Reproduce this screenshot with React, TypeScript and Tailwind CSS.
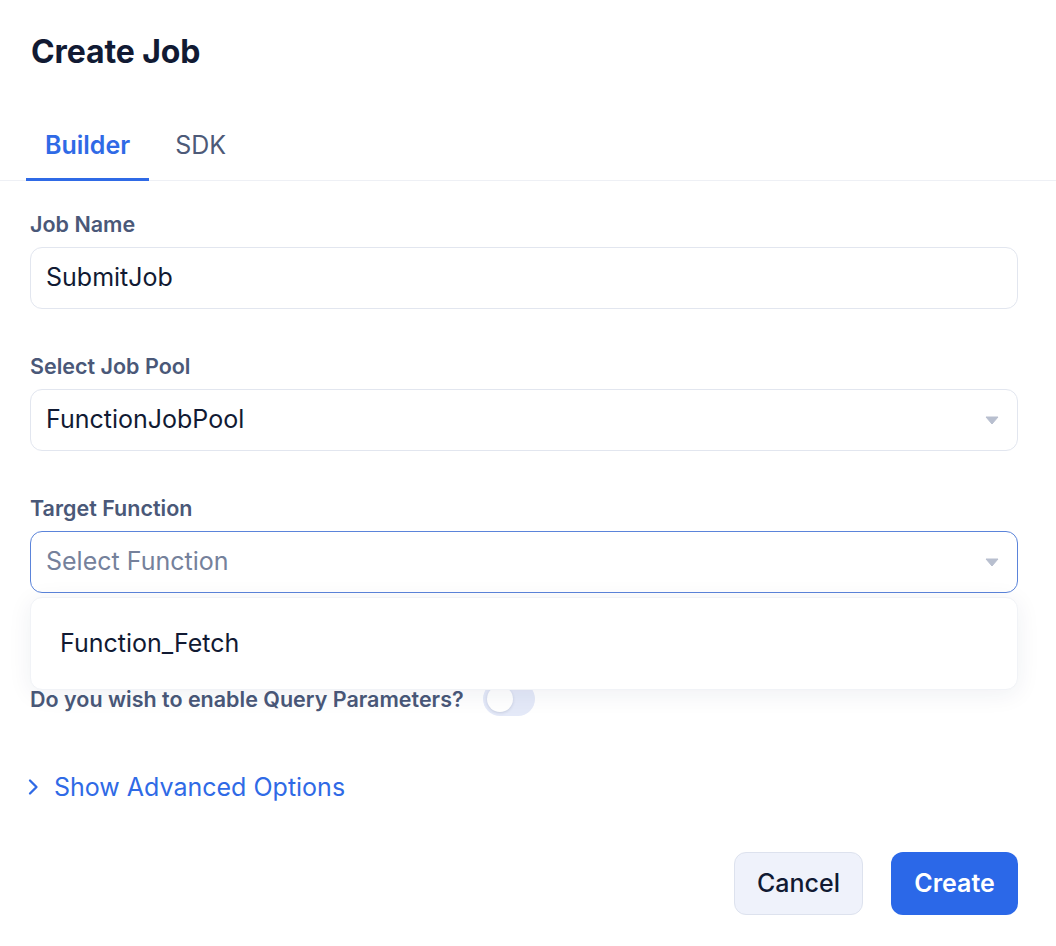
import React, { useState } from 'react'

const Caret = () => (
  <svg width="14" height="9" viewBox="0 0 14 9" className="shrink-0">
    <path d="M1 1h12L7 8z" fill="#b8bfcf" stroke="#b8bfcf" strokeWidth="1" strokeLinejoin="round" />
  </svg>
)

export default function App() {
  const [tab, setTab] = useState<'builder' | 'sdk'>('builder')
  const [queryParams, setQueryParams] = useState(false)

  return (
    <div
      className="w-[1056px] h-[946px] bg-white text-[#111a33] overflow-hidden"
      style={{ fontFamily: 'Inter, "Noto Sans", sans-serif' }}
    >
      {/* header */}
      <div className="pl-[31px] pt-[32px]">
        <h1 className="text-[32px] leading-[40px] font-bold tracking-[-0.1px]">Create Job</h1>
      </div>

      {/* tabs */}
      <div className="mt-[57px] flex border-b border-[#eef0f5] pl-[26px]">
        <button
          onClick={() => setTab('builder')}
          className={`px-[19px] pb-[17px] text-[25px] leading-[32px] border-b-[3px] -mb-px ${
            tab === 'builder'
              ? 'border-[#2f6ae6] text-[#2f6ae6] font-semibold'
              : 'border-transparent text-[#4d5a78] font-normal'
          }`}
        >
          Builder
        </button>
        <button
          onClick={() => setTab('sdk')}
          className={`ml-[6px] px-[20px] pb-[17px] text-[25px] leading-[32px] border-b-[3px] -mb-px ${
            tab === 'sdk'
              ? 'border-[#2f6ae6] text-[#2f6ae6] font-semibold'
              : 'border-transparent text-[#4d5a78] font-normal'
          }`}
        >
          SDK
        </button>
      </div>

      {/* form */}
      <div className="pl-[30px] pr-[38px] pt-[29px]">
        <label className="block text-[21.5px] leading-[28px] font-semibold text-[#4a5878]">Job Name</label>
        <div className="mt-[9px] h-[62px] rounded-[12px] border border-[#e2e6ef] flex items-center px-[15px] text-[25px]">
          SubmitJob
        </div>

        <label className="mt-[43px] block text-[21.5px] leading-[28px] font-semibold text-[#4a5878]">
          Select Job Pool
        </label>
        <div className="mt-[9px] h-[62px] rounded-[12px] border border-[#e2e6ef] flex items-center justify-between pl-[15px] pr-[18px] text-[25px]">
          <span>FunctionJobPool</span>
          <Caret />
        </div>

        <label className="mt-[43px] block text-[21.5px] leading-[28px] font-semibold text-[#4a5878]">
          Target Function
        </label>
        <div className="relative mt-[9px]">
          <div className="h-[62px] rounded-[12px] border border-[#5b84da] flex items-center justify-between pl-[15px] pr-[18px] text-[25px] text-[#75819b]">
            <span>Select Function</span>
            <Caret />
          </div>
          <div className="absolute left-0 right-0 top-[66px] z-10 h-[93px] rounded-[12px] border border-[#f1f3f7] bg-white shadow-[0_4px_24px_rgba(30,45,90,0.07)] flex items-center px-[29px] text-[25px] text-[#111a33]">
            Function_Fetch
          </div>
        </div>

        {/* query params */}
        <div className="mt-[89px] flex items-center gap-[19px]">
          <span className="text-[21.5px] leading-[28px] font-semibold text-[#4a5878]">
            Do you wish to enable Query Parameters?
          </span>
          <button
            onClick={() => setQueryParams(!queryParams)}
            className={`w-[52px] h-[34px] rounded-full p-[4px] flex items-center ${
              queryParams ? 'bg-[#2f6ae6] justify-end' : 'bg-[#e4e9f8] justify-start'
            }`}
          >
            <span className="w-[26px] h-[26px] rounded-full bg-white shadow-[0_1px_3px_rgba(30,45,90,0.15)]" />
          </button>
        </div>

        {/* advanced */}
        <button className="mt-[55px] -ml-[3px] flex items-center gap-[14px] text-[25px] leading-[32px] text-[#2f6ae6]">
          <svg width="13" height="18" viewBox="0 0 13 18" fill="none">
            <path d="M3 2.5l6.5 6.5L3 15.5" stroke="#2f6ae6" strokeWidth="2.3" strokeLinecap="round" strokeLinejoin="round" />
          </svg>
          Show Advanced Options
        </button>

        {/* actions */}
        <div className="mt-[49px] flex justify-end gap-[28px]">
          <button className="w-[129px] h-[63px] rounded-[12px] border border-[#dde2ee] bg-[#eff2fb] text-[25px] font-medium text-[#111a33]">
            Cancel
          </button>
          <button className="w-[127px] h-[63px] rounded-[12px] bg-[#2b68e8] text-[25px] font-semibold text-white">
            Create
          </button>
        </div>
      </div>
    </div>
  )
}
